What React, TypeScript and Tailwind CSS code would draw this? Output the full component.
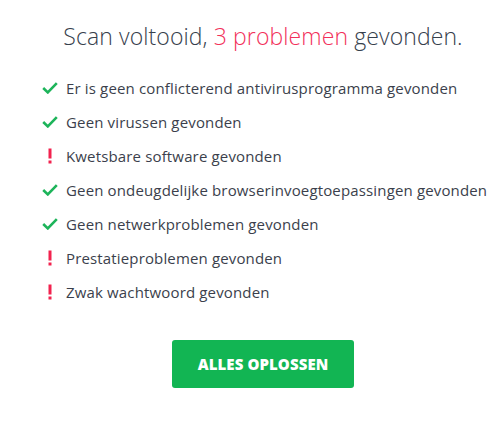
import React from "react";

const items: { ok: boolean; text: string }[] = [
  { ok: true, text: "Er is geen conflicterend antivirusprogramma gevonden" },
  { ok: true, text: "Geen virussen gevonden" },
  { ok: false, text: "Kwetsbare software gevonden" },
  { ok: true, text: "Geen ondeugdelijke browserinvoegtoepassingen gevonden" },
  { ok: true, text: "Geen netwerkproblemen gevonden" },
  { ok: false, text: "Prestatieproblemen gevonden" },
  { ok: false, text: "Zwak wachtwoord gevonden" },
];

function Check() {
  return (
    <svg width="16" height="12" viewBox="0 0 16 12" className="shrink-0">
      <path d="M1.2 6 L5.8 10.4 L14.8 1.2" fill="none" stroke="#1db45a" strokeWidth="2.6" />
    </svg>
  );
}

function Bang() {
  return (
    <svg width="16" height="16" viewBox="0 0 16 16" className="shrink-0">
      <rect x="6.5" y="0.5" width="3" height="10" fill="#f2224e" />
      <rect x="6.5" y="12.5" width="3" height="3" fill="#f2224e" />
    </svg>
  );
}

export default function App() {
  return (
    <div
      className="w-[491px] h-[429px] bg-white pl-[35px] overflow-hidden"
      style={{ fontFamily: '"Open Sans", "Liberation Sans", sans-serif' }}
    >
      <h1 className="pt-[21px] text-center text-[23px] leading-[30px] font-light tracking-[0.1px] text-[#36404c] whitespace-nowrap">
        Scan voltooid, <span className="text-[#f2305a]">3 problemen</span> gevonden.
      </h1>
      <ul className="mt-[20px] ml-[7px] flex flex-col">
        {items.map((it, i) => (
          <li key={i} className="flex items-center h-[34px] text-[15px] tracking-[0.15px] text-[#3b3f4c] whitespace-nowrap">
            <span className="w-[24px] flex justify-start">{it.ok ? <Check /> : <Bang />}</span>
            <span>{it.text}</span>
          </li>
        ))}
      </ul>
      <div className="flex justify-center mt-[31px]">
        <button className="w-[182px] h-[48px] rounded-[3px] bg-[#12b553] text-white text-[15px] font-extrabold tracking-[0.1px]">
          ALLES OPLOSSEN
        </button>
      </div>
    </div>
  );
}
